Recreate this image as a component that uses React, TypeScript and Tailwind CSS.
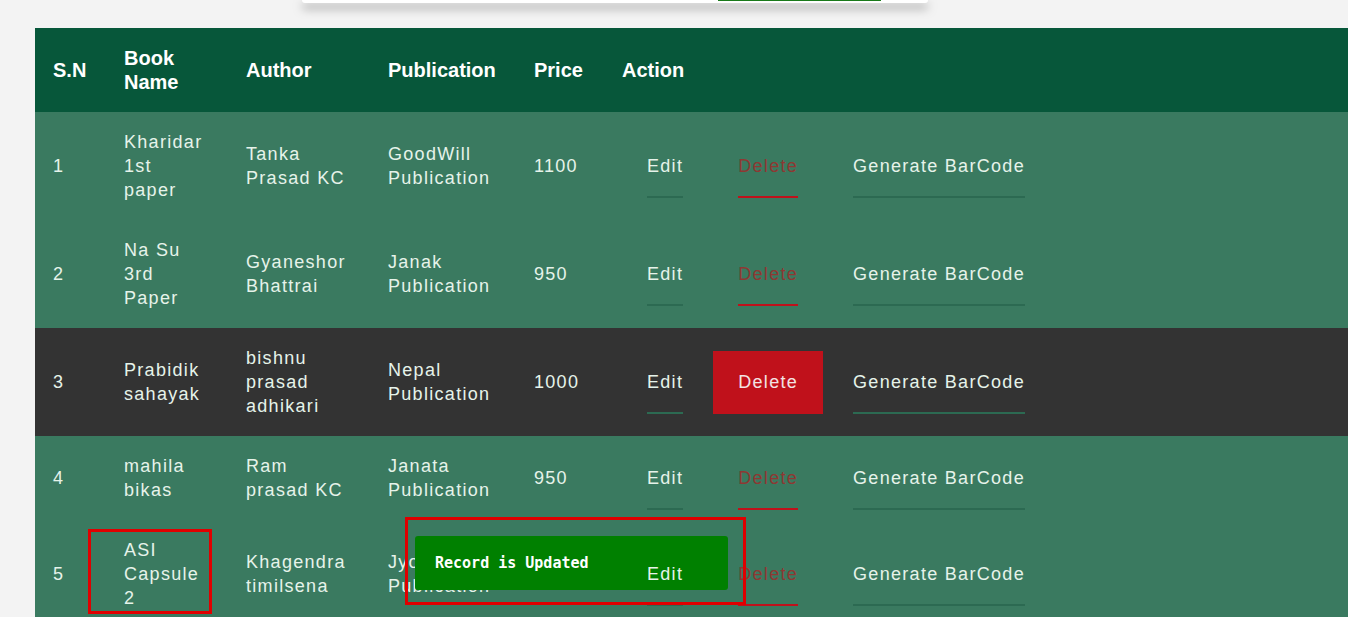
import React from 'react';

interface Book {
  sn: number;
  name: string[];
  author: string[];
  publication: string[];
  price: string;
}

const books: Book[] = [
  { sn: 1, name: ['Kharidar', '1st', 'paper'], author: ['Tanka', 'Prasad KC'], publication: ['GoodWill', 'Publication'], price: '1100' },
  { sn: 2, name: ['Na Su', '3rd', 'Paper'], author: ['Gyaneshor', 'Bhattrai'], publication: ['Janak', 'Publication'], price: '950' },
  { sn: 3, name: ['Prabidik', 'sahayak'], author: ['bishnu', 'prasad', 'adhikari'], publication: ['Nepal', 'Publication'], price: '1000' },
  { sn: 4, name: ['mahila', 'bikas'], author: ['Ram', 'prasad KC'], publication: ['Janata', 'Publication'], price: '950' },
  { sn: 5, name: ['ASI', 'Capsule', '2'], author: ['Khagendra', 'timilsena'], publication: ['Jyoti', 'Publication'], price: '1000' },
];

function Lines({ lines }: { lines: string[] }) {
  return (
    <>
      {lines.map((l, i) => (
        <span key={i} className="block whitespace-nowrap">
          {l}
        </span>
      ))}
    </>
  );
}

function ActionLink({ label, kind, active }: { label: string; kind: 'edit' | 'delete' | 'barcode'; active?: boolean }) {
  const isDelete = kind === 'delete';
  const box = isDelete && active ? 'bg-[#c0111b] text-[#f3e3e3]' : isDelete ? 'text-[#8e3833]' : 'text-[#e6f3ea]';
  const line = isDelete ? 'bg-[#c0111b]' : 'bg-[#2c6a52]';
  return (
    <a href="#" className={`relative z-20 inline-flex h-[63px] flex-col px-[25px] pt-[19px] ${box}`}>
      <span className="leading-[24px] whitespace-nowrap">{label}</span>
      <span className={`mt-auto h-[2px] w-full ${line}`} />
    </a>
  );
}

export default function App() {
  return (
    <div className="relative min-h-screen w-full overflow-hidden bg-[#f3f3f3] font-['Liberation_Sans',Arial,sans-serif]">
      {/* form card peeking above */}
      <div className="ml-[302px] h-[3px] w-[626px] rounded-b-[4px] bg-white shadow-[0_5px_10px_rgba(0,0,0,0.5)]">
        <div className="ml-[416px] h-[1px] w-[163px] bg-[#1a7a1a]" />
      </div>

      <table className="mt-[25px] ml-[35px] w-[1340px] table-fixed border-collapse text-left">
        <colgroup>
          <col className="w-[71px]" />
          <col className="w-[122px]" />
          <col className="w-[142px]" />
          <col className="w-[146px]" />
          <col className="w-[88px]" />
          <col />
        </colgroup>
        <thead>
          <tr className="bg-[#07573a] text-[20px] font-bold leading-[24px] text-white">
            <th className="px-[18px] py-[18px] align-middle">S.N</th>
            <th className="px-[18px] py-[18px] align-middle">Book Name</th>
            <th className="px-[18px] py-[18px] align-middle">Author</th>
            <th className="px-[18px] py-[18px] align-middle">Publication</th>
            <th className="px-[18px] py-[18px] align-middle">Price</th>
            <th className="px-[18px] py-[18px] align-middle">Action</th>
          </tr>
        </thead>
        <tbody className="text-[18px] leading-[24px] tracking-[1.3px] text-[#e6f3ea]">
          {books.map((b) => {
            const hovered = b.sn === 3;
            return (
              <tr key={b.sn} className={hovered ? 'bg-[#333333]' : 'bg-[#3a7a60]'}>
                <td className="px-[18px] py-[18px] align-middle">{b.sn}</td>
                <td className="px-[18px] py-[18px] align-middle"><Lines lines={b.name} /></td>
                <td className="px-[18px] py-[18px] align-middle"><Lines lines={b.author} /></td>
                <td className="px-[18px] py-[18px] align-middle"><Lines lines={b.publication} /></td>
                <td className="px-[18px] py-[18px] align-middle">{b.price}</td>
                <td className="px-[18px] py-0 align-middle">
                  <div className="flex gap-[5px]">
                    <ActionLink label="Edit" kind="edit" />
                    <ActionLink label="Delete" kind="delete" active={hovered} />
                    <ActionLink label="Generate BarCode" kind="barcode" />
                  </div>
                </td>
              </tr>
            );
          })}
        </tbody>
      </table>

      {/* toast */}
      <div className="absolute left-[415px] top-[536px] z-10 flex h-[54px] w-[313px] items-center rounded-[3px] bg-[#008000] px-[20px]">
        <span className="font-['DejaVu_Sans_Mono',monospace] text-[15px] font-bold text-white">Record is Updated</span>
      </div>

      {/* annotation boxes */}
      <div className="pointer-events-none absolute left-[88px] top-[529px] z-30 h-[85px] w-[124px] border-[3px] border-[#e00000]" />
      <div className="pointer-events-none absolute left-[405px] top-[517px] z-30 h-[88px] w-[341px] border-[3px] border-[#e00000]" />
    </div>
  );
}
